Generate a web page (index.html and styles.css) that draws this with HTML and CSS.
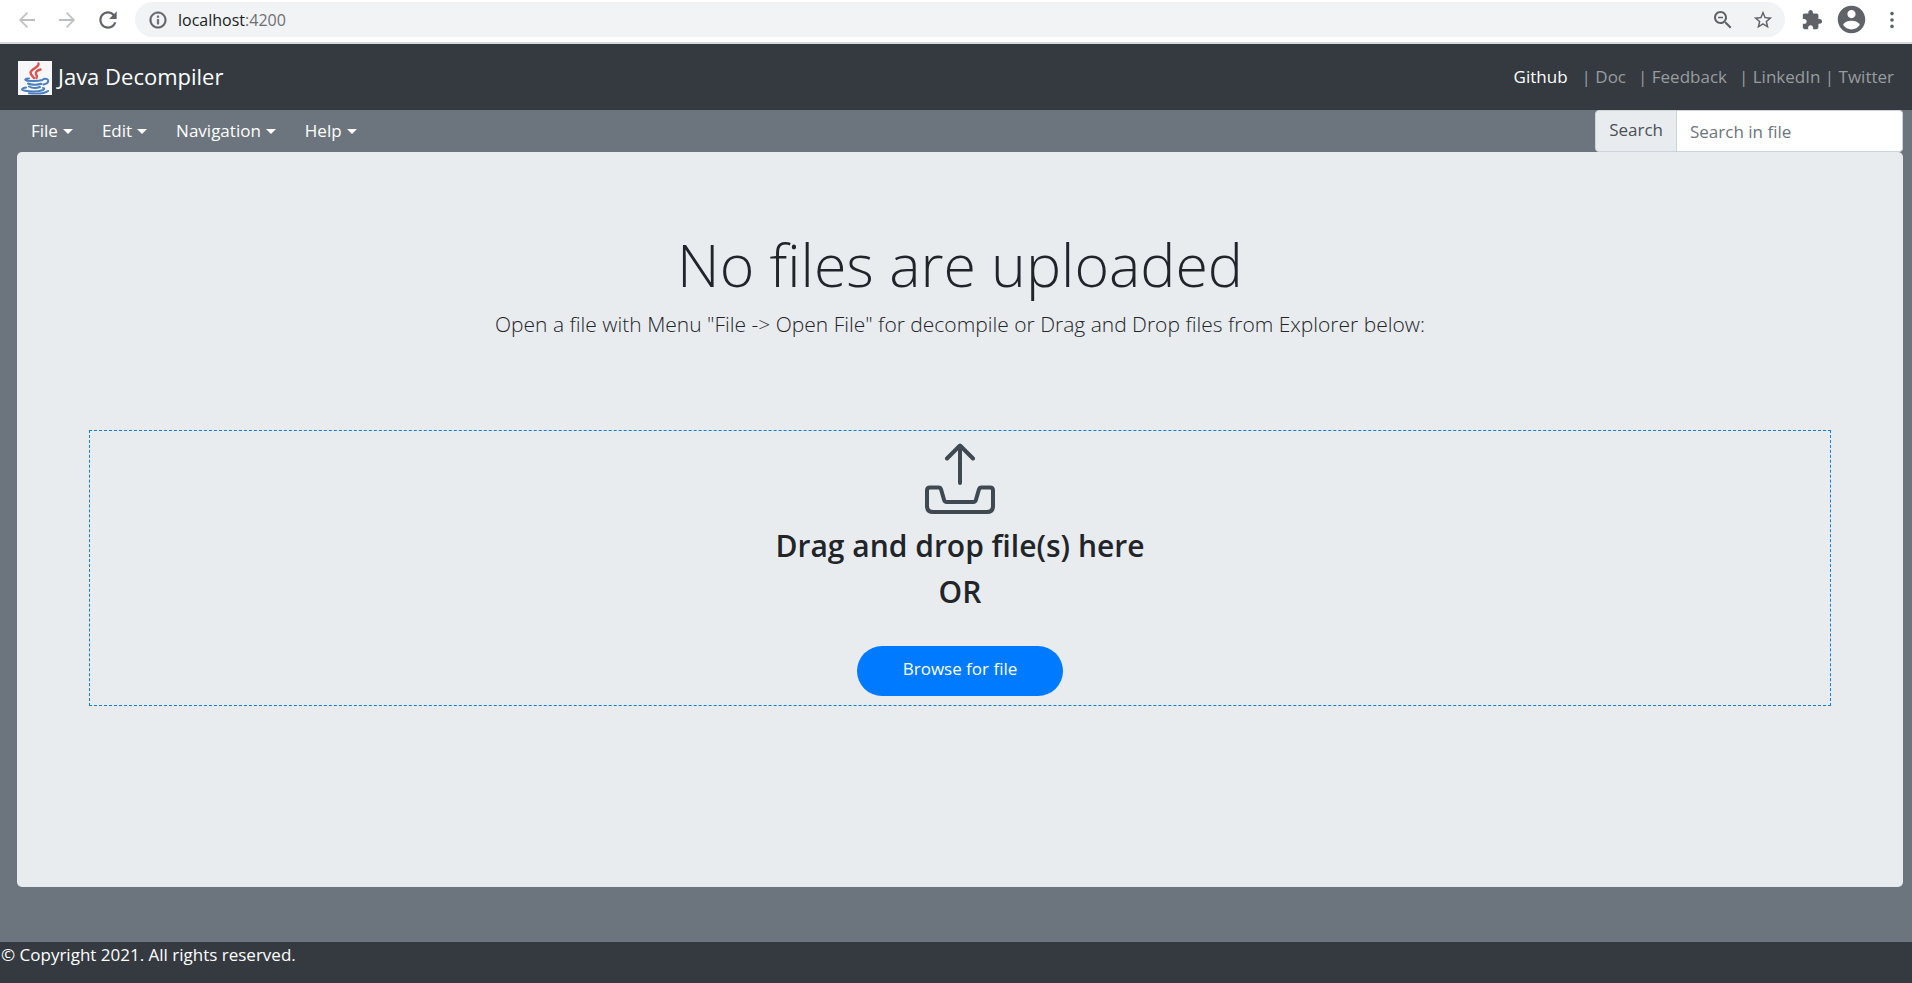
FILE: index.html
```
<!DOCTYPE html>
<html lang="en">
<head>
<meta charset="utf-8">
<title>Java Decompiler</title>
<link rel="stylesheet" href="styles.css">
</head>
<body>
<div class="toolbar">
  <div class="toolbar-nav">
    <button class="tool tool-off" aria-label="Back"><svg width="24" height="24" viewBox="0 0 24 24"><path d="M20 11.1H7.3l5.7-5.8L11.800 4 4 12l7.800 8 1.200-1.300-5.700-5.800H20z"/></svg></button>
    <button class="tool tool-off" aria-label="Forward"><svg width="24" height="24" viewBox="0 0 24 24"><path d="M4 11.100h12.700L11 5.300 12.200 4 20 12l-7.800 8-1.200-1.300 5.700-5.800H4z"/></svg></button>
    <button class="tool" aria-label="Reload"><svg width="26" height="26" viewBox="0 0 24 24"><path d="M17.650 6.350C16.200 4.900 14.210 4 12 4c-4.420 0-7.990 3.580-7.990 8s3.570 8 7.990 8c3.730 0 6.840-2.550 7.730-6h-2.080c-.820 2.330-3.040 4-5.650 4-3.310 0-6-2.690-6-6s2.690-6 6-6c1.660 0 3.140.690 4.220 1.780L13 11h7V4l-2.350 2.350z"/></svg></button>
  </div>
  <div class="address">
    <svg width="20" height="20" viewBox="0 0 24 24"><path stroke="#5f6368" stroke-width=".5" d="M11 7h2v2h-2zm0 4h2v6h-2zm1-9C6.480 2 2 6.480 2 12s4.480 10 10 10 10-4.480 10-10S17.520 2 12 2zm0 18c-4.410 0-8-3.590-8-8s3.590-8 8-8 8 3.590 8 8-3.590 8-8 8z"/></svg>
    <span class="url">localhost<span class="port">:4200</span></span>
    <button class="tool" aria-label="Zoom"><svg width="24" height="24" viewBox="0 0 24 24"><path d="M15.500 14h-.790l-.280-.270C15.410 12.590 16 11.110 16 9.500 16 5.910 13.090 3 9.500 3S3 5.910 3 9.500 5.910 16 9.500 16c1.610 0 3.090-.590 4.230-1.570l.270.280v.790l5 4.990L20.490 19l-4.990-5zm-6 0C7.010 14 5 11.990 5 9.500S7.010 5 9.500 5 14 7.010 14 9.500 11.990 14 9.500 14zM7 8.800h5v1.400H7z"/></svg></button>
    <button class="tool" aria-label="Bookmark"><svg width="22" height="22" viewBox="0 0 24 24"><path d="M22 9.240l-7.190-.620L12 2 9.190 8.630 2 9.240l5.460 4.730L5.820 21 12 17.270 18.180 21l-1.630-7.030L22 9.240zM12 15.400l-3.760 2.270 1-4.280-3.320-2.880 4.380-.380L12 6.100l1.710 4.040 4.380.380-3.320 2.880 1 4.280L12 15.400z"/></svg></button>
  </div>
  <div class="toolbar-end">
    <button class="tool" aria-label="Extensions"><svg width="22" height="22" viewBox="0 0 24 24"><path d="M20.500 11H19V7c0-1.100-.900-2-2-2h-4V3.500C13 2.120 11.880 1 10.500 1S8 2.120 8 3.500V5H4c-1.100 0-1.990.900-1.990 2v3.800H3.500c1.490 0 2.700 1.210 2.700 2.700s-1.210 2.700-2.700 2.700H2V20c0 1.100.900 2 2 2h3.800v-1.500c0-1.490 1.210-2.700 2.700-2.700 1.490 0 2.700 1.210 2.700 2.700V22H17c1.100 0 2-.900 2-2v-4h1.500c1.380 0 2.500-1.120 2.500-2.500S21.880 11 20.500 11z"/></svg></button>
    <button class="tool" aria-label="Profile"><svg width="33" height="33" viewBox="0 0 24 24"><path d="M12 2C6.480 2 2 6.480 2 12s4.480 10 10 10 10-4.480 10-10S17.520 2 12 2zm0 3c1.660 0 3 1.340 3 3s-1.340 3-3 3-3-1.340-3-3 1.340-3 3-3zm0 14.200c-2.500 0-4.710-1.280-6-3.220.030-1.990 4-3.080 6-3.080 1.990 0 5.970 1.090 6 3.080-1.290 1.940-3.500 3.220-6 3.220z"/></svg></button>
    <button class="tool" aria-label="More"><svg width="24" height="24" viewBox="0 0 24 24"><circle cx="12" cy="5.600" r="1.800"/><circle cx="12" cy="12" r="1.800"/><circle cx="12" cy="18.400" r="1.800"/></svg></button>
  </div>
</div>

<header class="navbar">
  <a class="brand" href="#">
    <svg width="34" height="34" viewBox="0 0 34 34" fill="none" stroke-linecap="round">
      <rect width="34" height="34" fill="#f7f7fa"/>
      <g stroke="#e0504c" stroke-width="2.400">
        <path d="M20.500 2.500c1 4-7.500 5-8 9 0 2 2 3.500 3.500 5.500"/>
        <path d="M22.500 8.500c-3 1-5.500 2.500-4.500 4.500 1 1.500 1.500 2 .500 4"/>
      </g>
      <g stroke="#4a7fc0" stroke-width="2">
        <path d="M11 17.500c-3 0-6 1.500-1 2.200 5 .500 11 .300 14.500-.700"/>
        <path d="M25.500 18c6-1.500 6.500 4.500 0 5.500"/>
        <path d="M10 22.500c3 1.500 10 1.500 13.500.300"/>
        <path d="M11 25.500c3 1.700 8 1.600 11 .500"/>
        <path d="M8 26.500c-4 .500-6 2.500-1 3.300 6 1 14 .800 18-.800 2-1 1.500-1.800 0-2"/>
        <path d="M11 32.300c7 .600 16 .200 19-2.300"/>
      </g>
    </svg>
    <span>Java Decompiler</span>
  </a>
  <nav class="links">
    <a class="active" href="#">Github</a>
    <a href="#">| Doc</a>
    <a href="#">| Feedback</a>
    <span><a href="#">| LinkedIn</a> <a href="#">| Twitter</a></span>
  </nav>
</header>

<div class="menubar">
  <nav class="menus">
    <button class="menu">File</button>
    <button class="menu">Edit</button>
    <button class="menu">Navigation</button>
    <button class="menu">Help</button>
  </nav>
  <div class="search">
    <label class="search-label" for="search">Search</label>
    <input class="search-input" id="search" type="text" placeholder="Search in file">
  </div>
</div>

<main class="content">
  <section class="panel">
    <h1 class="title">No files are uploaded</h1>
    <p class="lead">Open a file with Menu "File -&gt; Open File" for decompile or Drag and Drop files from Explorer below:</p>
    <div class="dropzone">
      <svg class="upload" width="72" height="72" viewBox="0 0 72 72" fill="none" stroke="#3f4952" stroke-width="4" stroke-linecap="round" stroke-linejoin="round">
        <path d="M36 40V3M23 15.500 36 2.500l13 13"/>
        <path d="M6 44.500h8.500q2 0 2.600 2l3 10.500q.600 2 2.600 2h26.600q2 0 2.600-2l3-10.500q.600-2 2.600-2H66q3 0 3 3V63q0 6-6 6H9q-6 0-6-6V47.500q0-3 3-3z"/>
      </svg>
      <h3 class="drop-text">Drag and drop file(s) here</h3>
      <h3 class="drop-text">OR</h3>
      <button class="browse">Browse for file</button>
    </div>
  </section>
</main>

<footer class="footer">© Copyright 2021. All rights reserved.</footer>
</body>
</html>
```
FILE: styles.css
```
* { box-sizing: border-box; }

body {
  margin: 0;
  min-height: 100vh;
  display: flex;
  flex-direction: column;
  background: #6c757d;
  color: #212529;
  font: 17px/26px "Segoe UI", "Open Sans", "Noto Sans", sans-serif;
}

button, input { font: inherit; }
button { border: 0; background: none; cursor: pointer; }
a { color: inherit; text-decoration: none; }
svg { display: block; flex: none; }
h1, h3, p { margin: 0; }

.toolbar {
  display: flex;
  align-items: center;
  padding: 2px 8px 5px 15px;
  background: #fff;
  border-bottom: 2px solid #d5d8dc;
}
.toolbar-nav { display: flex; align-items: center; gap: 16px; margin-right: 14px; }
.toolbar-end { display: flex; align-items: center; margin-left: 16px; gap: 12px; }
.tool { padding: 0; color: #5f6368; }
.tool svg, .address > svg { fill: #5f6368; }
.tool-off svg { fill: #bcbec0; }
.address {
  flex: 1;
  display: flex;
  align-items: center;
  gap: 17px;
  height: 35px;
  padding: 0 11px 0 13px;
  border-radius: 18px;
  background: #f1f3f4;
}
.url { flex: 1; margin-left: -7px; color: #202124; font-size: 16px; }
.port { color: #6b7075; }

.navbar {
  display: flex;
  justify-content: space-between;
  align-items: flex-start;
  padding: 17px 18px 15px;
  background: #343a40;
}
.brand { display: flex; gap: 6px; color: #fff; font-size: 22px; line-height: 30px; }
.links { display: flex; gap: 12px; line-height: 32px; color: #999c9f; }
.links .active { margin-right: 2px; color: #fff; }

.menubar { display: flex; justify-content: space-between; padding: 0 9px 0 17px; }
.menus { display: flex; }
.menu {
  display: flex;
  align-items: center;
  gap: 5px;
  padding: 0 15px 0 14px;
  color: #fff;
}
.menu::after {
  content: "";
  border: 5px solid transparent;
  border-top-color: #fff;
  border-bottom: 0;
}
.search { display: flex; height: 42px; }
.search-label {
  padding: 6px 13px;
  border: 1px solid #ced4da;
  border-radius: 4px 0 0 4px;
  background: #e9ecef;
  color: #495057;
}
.search-input {
  width: 226px;
  padding: 2px 13px 0;
  border: 1px solid #ced4da;
  border-left: 0;
  border-radius: 0 4px 4px 0;
  background: #fff;
}
.search-input::placeholder { color: #6c757d; opacity: 1; }

.content { flex: 1; display: flex; padding: 0 9px 55px 17px; }
.panel {
  flex: 1;
  padding: 72px;
  border-radius: 5px;
  background: #e9ecef;
  text-align: center;
}
.title { font-size: 59px; line-height: 80px; font-weight: 300; }
.lead { font-size: 21px; line-height: 40px; font-weight: 300; }
.dropzone {
  display: flex;
  flex-direction: column;
  align-items: center;
  margin-top: 86px;
  padding: 12px 0 9px;
  border: 1px dashed #0f7fd6;
}
.upload { margin-bottom: 8px; }
.drop-text { font-size: 30px; line-height: 46px; font-weight: 600; }
.browse {
  margin-top: 31px;
  padding: 10px 46px 14px;
  border-radius: 25px;
  background: #007bff;
  color: #fff;
}

.footer { height: 41px; padding: 0 1px; background: #343a40; color: #fff; }
```
